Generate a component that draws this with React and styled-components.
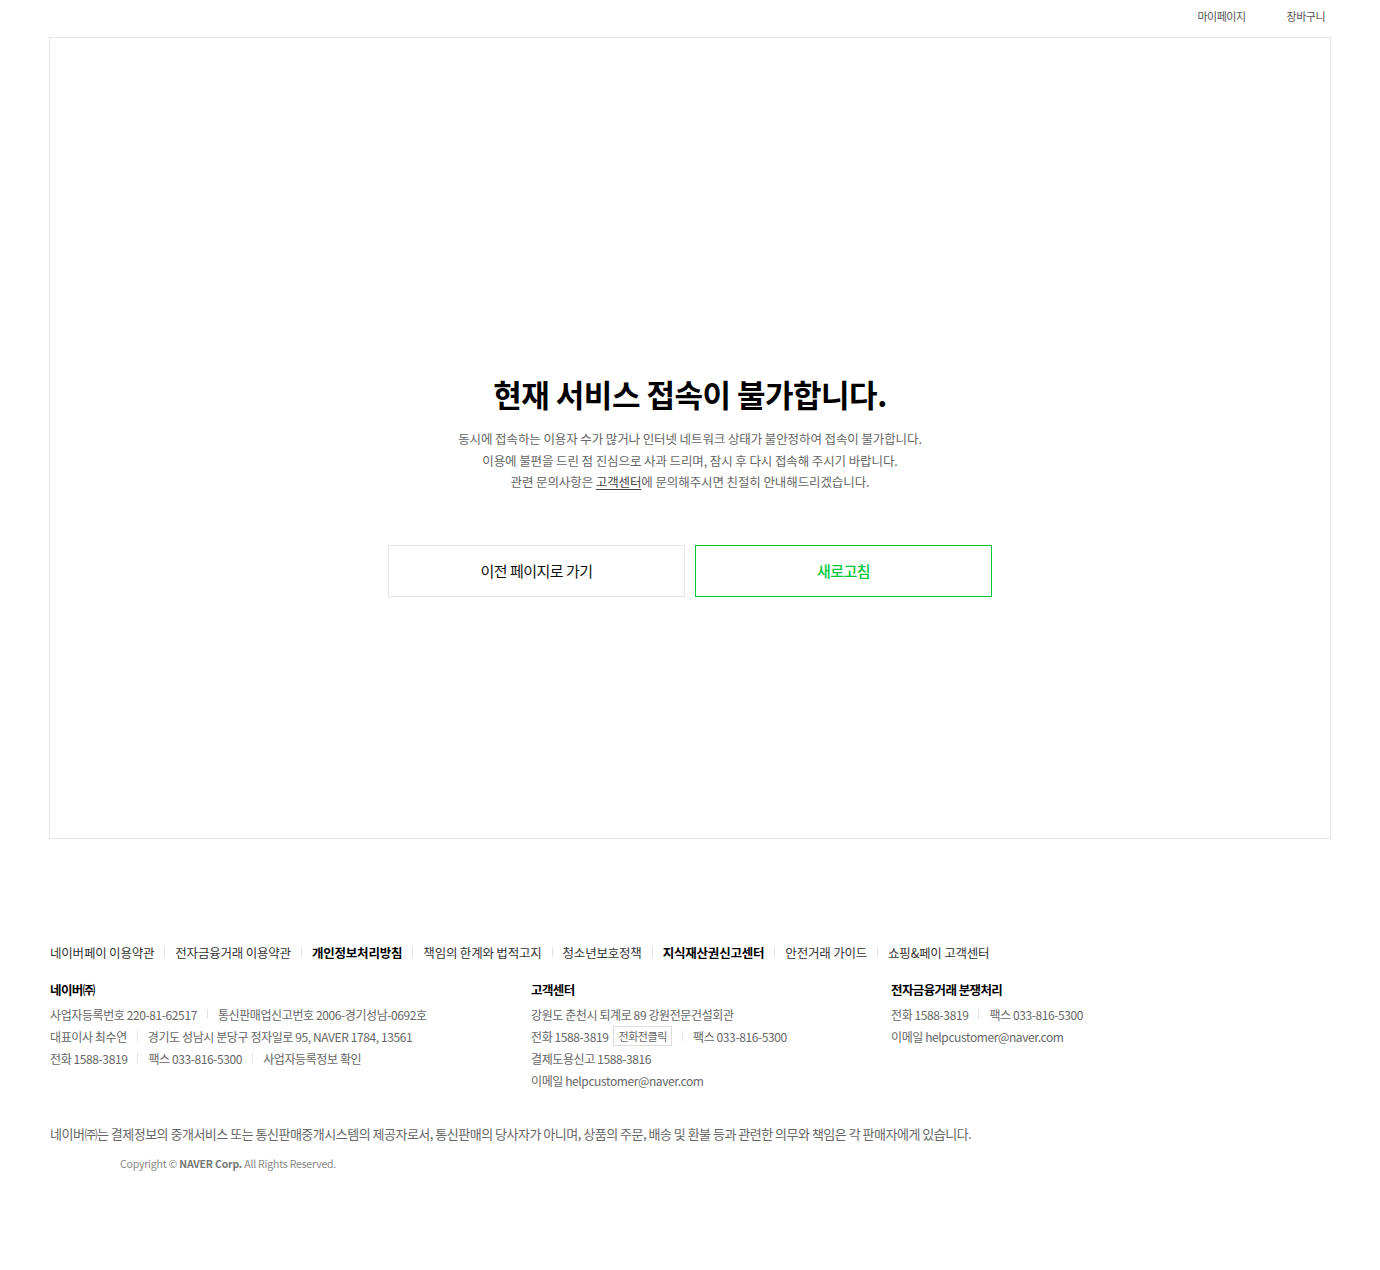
import React from 'react';
import styled, { createGlobalStyle } from 'styled-components';

const GlobalStyle = createGlobalStyle`
  html, body {
    margin: 0;
    padding: 0;
    background: #fff;
  }
  body {
    font-family: "Noto Sans CJK KR", "Noto Sans", sans-serif;
    color: #333;
  }
`;

const Page = styled.div`
  width: 1380px;
  min-height: 1270px;
  display: flex;
  flex-direction: column;
`;

const TopBar = styled.div`
  display: flex;
  justify-content: flex-end;
  height: 32px;
  align-items: center;
  padding-right: 55px;
  gap: 41px;
`;

const TopLink = styled.a`
  font-size: 11px;
  letter-spacing: -0.5px;
  color: #555;
  text-decoration: none;
`;

const ErrorBox = styled.main`
  margin: 5px 49px 0;
  height: 800px;
  border: 1px solid #e5e5e5;
  display: flex;
  flex-direction: column;
  align-items: center;
  justify-content: center;
`;

const Content = styled.div`
  display: flex;
  flex-direction: column;
  align-items: center;
  margin-top: 95px;
`;

const Title = styled.h1`
  margin: 0;
  font-size: 31px;
  font-weight: 700;
  letter-spacing: -0.5px;
  color: #000;
  line-height: 40px;
`;

const Description = styled.p`
  margin: 14px 0 0;
  font-size: 12.5px;
  letter-spacing: -0.1px;
  line-height: 21.5px;
  color: #666;
  text-align: center;

  u {
    color: #444;
    text-underline-offset: 2px;
  }
`;

const ButtonRow = styled.div`
  display: flex;
  gap: 10px;
  margin-top: 52px;
`;

const ActionButton = styled.button`
  width: 297px;
  height: 52px;
  background: #fff;
  border: 1px solid ${p => (p.$primary ? '#00c73c' : '#e5e5e5')};
  color: ${p => (p.$primary ? '#00c73c' : '#111')};
  font-family: inherit;
  font-size: 15px;
  letter-spacing: -0.5px;
  font-weight: ${p => (p.$primary ? 500 : 400)};
  cursor: pointer;
`;

const Footer = styled.footer`
  padding: 103px 50px 0;
`;

const LinkRow = styled.ul`
  display: flex;
  align-items: center;
  margin: 0;
  padding: 0;
  list-style: none;
  height: 20px;

  li + li::before {
    content: '';
    width: 1px;
    height: 10px;
    background: #e3e3e3;
    margin: 0 10px;
  }
`;

const LinkItem = styled.li`
  display: flex;
  align-items: center;
  font-size: 12.5px;
  letter-spacing: -0.2px;
  color: ${p => (p.$strong ? '#000' : '#333')};
  font-weight: ${p => (p.$strong ? 700 : 400)};
`;

const InfoGrid = styled.div`
  display: grid;
  grid-template-columns: 481px 360px 1fr;
  margin-top: 18px;
`;

const InfoColumn = styled.div`
  display: flex;
  flex-direction: column;
`;

const InfoTitle = styled.h3`
  margin: 0 0 3px;
  font-size: 12.5px;
  font-weight: 700;
  letter-spacing: -0.6px;
  color: #000;
  line-height: 20px;
`;

const InfoLine = styled.div`
  display: flex;
  align-items: center;
  height: 22px;
  font-size: 12px;
  letter-spacing: -0.4px;
  color: #666;
`;

const InfoItem = styled.span`
  display: flex;
  align-items: center;

  & + &::before {
    content: '';
    width: 1px;
    height: 10px;
    background: #e3e3e3;
    margin: 0 10px;
  }
`;

const CallButton = styled.span`
  display: inline-flex;
  align-items: center;
  height: 18px;
  padding: 0 4px;
  margin-left: 5px;
  border: 1px solid #ddd;
  font-size: 11px;
  color: #666;
`;

const Disclaimer = styled.p`
  margin: 33px 0 0;
  font-size: 13px;
  letter-spacing: -0.5px;
  color: #666;
  line-height: 20px;
`;

const Copyright = styled.p`
  margin: 12px 0 0 70px;
  font-size: 10.5px;
  letter-spacing: -0.2px;
  color: #888;
  line-height: 16px;

  b {
    color: #777;
  }
`;

const footerLinks = [
  { label: '네이버페이 이용약관' },
  { label: '전자금융거래 이용약관' },
  { label: '개인정보처리방침', strong: true },
  { label: '책임의 한계와 법적고지' },
  { label: '청소년보호정책' },
  { label: '지식재산권신고센터', strong: true },
  { label: '안전거래 가이드' },
  { label: '쇼핑&페이 고객센터' },
];

function InfoRow({ items }) {
  return (
    <InfoLine>
      {items.map((item, i) => (
        <InfoItem key={i}>{item}</InfoItem>
      ))}
    </InfoLine>
  );
}

export default function App() {
  return (
    <Page>
      <GlobalStyle />
      <TopBar>
        <TopLink href="#">마이페이지</TopLink>
        <TopLink href="#">장바구니</TopLink>
      </TopBar>

      <ErrorBox>
        <Content>
          <Title>현재 서비스 접속이 불가합니다.</Title>
          <Description>
            동시에 접속하는 이용자 수가 많거나 인터넷 네트워크 상태가 불안정하여 접속이 불가합니다.
            <br />
            이용에 불편을 드린 점 진심으로 사과 드리며, 잠시 후 다시 접속해 주시기 바랍니다.
            <br />
            관련 문의사항은 <u>고객센터</u>에 문의해주시면 친절히 안내해드리겠습니다.
          </Description>
          <ButtonRow>
            <ActionButton>이전 페이지로 가기</ActionButton>
            <ActionButton $primary>새로고침</ActionButton>
          </ButtonRow>
        </Content>
      </ErrorBox>

      <Footer>
        <LinkRow>
          {footerLinks.map(link => (
            <LinkItem key={link.label} $strong={link.strong}>
              {link.label}
            </LinkItem>
          ))}
        </LinkRow>

        <InfoGrid>
          <InfoColumn>
            <InfoTitle>네이버㈜</InfoTitle>
            <InfoRow items={['사업자등록번호 220-81-62517', '통신판매업신고번호 2006-경기성남-0692호']} />
            <InfoRow items={['대표이사 최수연', '경기도 성남시 분당구 정자일로 95, NAVER 1784, 13561']} />
            <InfoRow items={['전화 1588-3819', '팩스 033-816-5300', '사업자등록정보 확인']} />
          </InfoColumn>
          <InfoColumn>
            <InfoTitle>고객센터</InfoTitle>
            <InfoRow items={['강원도 춘천시 퇴계로 89 강원전문건설회관']} />
            <InfoRow
              items={[
                <>
                  전화 1588-3819 <CallButton>전화전클릭</CallButton>
                </>,
                '팩스 033-816-5300',
              ]}
            />
            <InfoRow items={['결제도용신고 1588-3816']} />
            <InfoRow items={['이메일 helpcustomer@naver.com']} />
          </InfoColumn>
          <InfoColumn>
            <InfoTitle>전자금융거래 분쟁처리</InfoTitle>
            <InfoRow items={['전화 1588-3819', '팩스 033-816-5300']} />
            <InfoRow items={['이메일 helpcustomer@naver.com']} />
          </InfoColumn>
        </InfoGrid>

        <Disclaimer>
          네이버㈜는 결제정보의 중개서비스 또는 통신판매중개시스템의 제공자로서, 통신판매의 당사자가 아니며, 상품의 주문, 배송 및 환불 등과 관련한 의무와 책임은 각 판매자에게 있습니다.
        </Disclaimer>
        <Copyright>
          Copyright © <b>NAVER Corp.</b> All Rights Reserved.
        </Copyright>
      </Footer>
    </Page>
  );
}
